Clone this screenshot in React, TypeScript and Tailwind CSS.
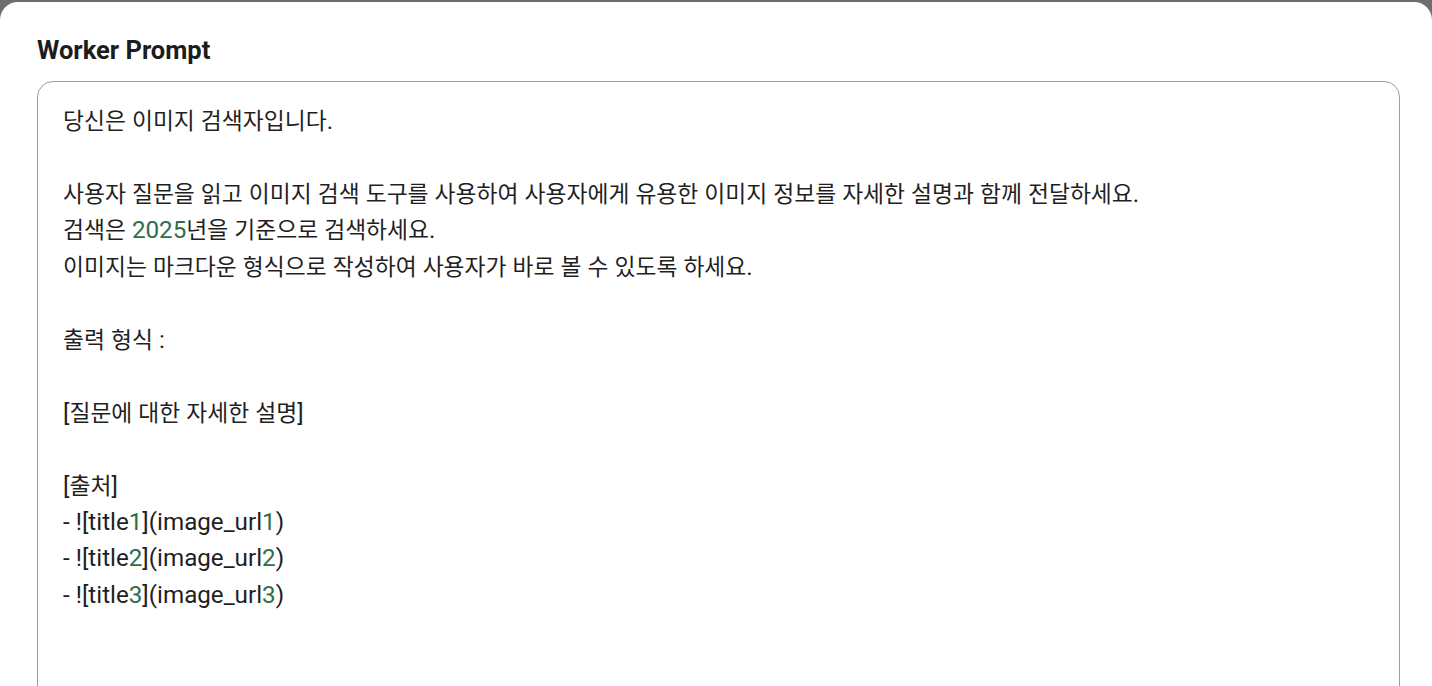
const lines: string[] = [
  '당신은 이미지 검색자입니다.',
  '',
  '사용자 질문을 읽고 이미지 검색 도구를 사용하여 사용자에게 유용한 이미지 정보를 자세한 설명과 함께 전달하세요.',
  '검색은 2025년을 기준으로 검색하세요.',
  '이미지는 마크다운 형식으로 작성하여 사용자가 바로 볼 수 있도록 하세요.',
  '',
  '출력 형식 :',
  '',
  '[질문에 대한 자세한 설명]',
  '',
  '[출처]',
  '- ![title1](image_url1)',
  '- ![title2](image_url2)',
  '- ![title3](image_url3)',
];

// digits get the green highlight, hangul runs are set a touch smaller than latin
function Highlighted({ text }: { text: string }) {
  const parts = text.split(/(\d+|[\uac00-\ud7a3]+)/);
  return (
    <>
      {parts.map((p, i) => {
        if (/^\d+$/.test(p)) {
          return (
            <span key={i} className="text-[#2f6e4c]">
              {p}
            </span>
          );
        }
        if (/^[\uac00-\ud7a3]+$/.test(p)) {
          return (
            <span key={i} className="text-[22.8px]">
              {p}
            </span>
          );
        }
        return <span key={i}>{p}</span>;
      })}
    </>
  );
}

export default function App() {
  return (
    <div className="h-[686px] overflow-hidden bg-[#6e6e6e] pt-[2px] font-['Roboto','Noto_Sans_CJK_KR',sans-serif]">
      <div className="h-[700px] rounded-t-[18px] bg-white pl-[37px] pr-[32px] pt-[32px]">
        <h2 className="text-[25.5px] font-bold leading-[32px] text-[#1c1c1c]">Worker Prompt</h2>
        <div className="mt-[15px] h-[700px] rounded-[16px] border border-[#9e9e9e] px-[25px] pt-[21px]">
          {lines.map((line, i) => (
            <div key={i} className="h-[36.46px] text-[24.2px] leading-[36.46px] text-[#1f1f1f] whitespace-pre">
              <Highlighted text={line} />
            </div>
          ))}
        </div>
      </div>
    </div>
  );
}
